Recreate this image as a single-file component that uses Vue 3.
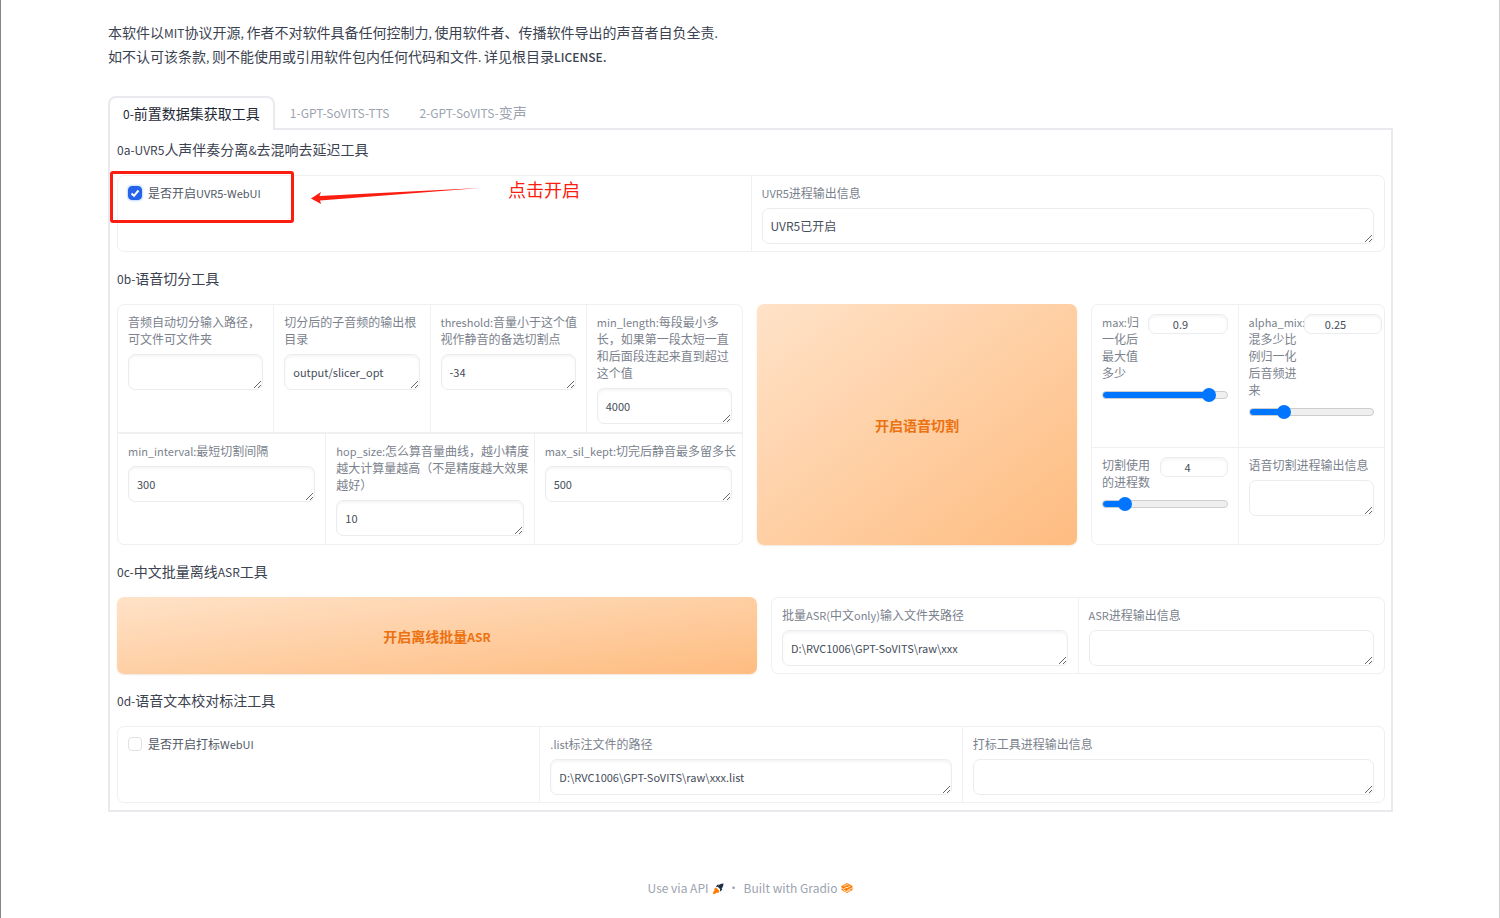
<script setup>
import { h, reactive, ref } from 'vue'

// One span per line, with runs of Latin text set smaller than the Chinese around them.
const parts = (line) =>
  line.split(/([\x20-\x7e]+)/).filter(Boolean).map((part) =>
    /^[\x20-\x7e]+$/.test(part) ? h('span', { class: 'latin' }, part) : part
  )
const Mixed = (props) => {
  const lines = props.text.split('\n')
  return h('span', lines.length > 1 ? lines.map((line) => h('span', { class: 'line' }, parts(line))) : parts(lines[0]))
}
Mixed.props = ['text']

const tabs = ['0-前置数据集获取工具', '1-GPT-SoVITS-TTS', '2-GPT-SoVITS-变声']
const active = ref(0)

const uvrOpen = ref(true)
const uvrInfo = ref('UVR5已开启')
const labelOpen = ref(false)

const sliceRows = reactive([
  [
    { id: 'slice-in', label: '音频自动切分输入路径，\n可文件可文件夹', value: '' },
    { id: 'slice-out', label: '切分后的子音频的输出根\n目录', value: 'output/slicer_opt' },
    { id: 'threshold', label: 'threshold:音量小于这个值\n视作静音的备选切割点', value: '-34' },
    { id: 'min-length', label: 'min_length:每段最小多\n长，如果第一段太短一直\n和后面段连起来直到超过\n这个值', value: '4000' }
  ],
  [
    { id: 'min-interval', label: 'min_interval:最短切割间隔', value: '300' },
    { id: 'hop-size', label: 'hop_size:怎么算音量曲线，越小精度\n越大计算量越高（不是精度越大效果\n越好）', value: '10' },
    { id: 'max-sil', label: 'max_sil_kept:切完后静音最多留多长', value: '500' }
  ]
])

const sliders = reactive([
  { id: 'max', size: 'wide', label: 'max:归\n一化后\n最大值\n多少', value: 0.9, min: 0, max: 1, step: 0.05 },
  { id: 'alpha', size: 'over', label: 'alpha_mix:\n混多少比\n例归一化\n后音频进\n来', value: 0.25, min: 0, max: 1, step: 0.05 },
  { id: 'procs', size: 'narrow', label: '切割使用\n的进程数', value: 4, min: 1, max: 23, step: 1 }
])
const fill = (s) => ({ '--fill': (s.value - s.min) / (s.max - s.min) })

const sliceInfo = ref('')
const asrPath = ref('D:\\RVC1006\\GPT-SoVITS\\raw\\xxx')
const asrInfo = ref('')
const listPath = ref('D:\\RVC1006\\GPT-SoVITS\\raw\\xxx.list')
const listInfo = ref('')
</script>

<template>
  <div class="page">
    <main>
      <p class="intro">
        <Mixed text="本软件以MIT协议开源, 作者不对软件具备任何控制力, 使用软件者、传播软件导出的声音者自负全责." /><br>
        <Mixed text="如不认可该条款, 则不能使用或引用软件包内任何代码和文件. 详见根目录" /><strong>LICENSE</strong>.
      </p>

      <nav class="tabs" role="tablist">
        <button
          v-for="(tab, i) in tabs" :key="tab" type="button" role="tab"
          class="tab" :class="{ selected: active === i }" :aria-selected="active === i"
          @click="active = i"
        ><Mixed :text="tab" /></button>
      </nav>

      <section class="panel">
        <h2><Mixed text="0a-UVR5人声伴奏分离&去混响去延迟工具" /></h2>
        <div class="form marked">
          <div class="row">
            <div class="cell">
              <label class="check"><input v-model="uvrOpen" type="checkbox"><Mixed text="是否开启UVR5-WebUI" /></label>
            </div>
            <div class="cell">
              <label class="caption" for="uvr-info"><Mixed text="UVR5进程输出信息" /></label>
              <textarea id="uvr-info" v-model="uvrInfo" class="output" rows="1"></textarea>
            </div>
          </div>
          <div class="highlight"></div>
          <svg class="arrow" width="172" height="20" viewBox="0 0 172 20" aria-hidden="true">
            <path d="M1 13.500 L11 7 L9.500 11 L170 3 L10 15.500 L11 19 Z" fill="#fb1d10" />
          </svg>
          <span class="note">点击开启</span>
        </div>

        <h2><Mixed text="0b-语音切分工具" /></h2>
        <div class="slicer">
          <div class="form">
            <div v-for="(row, r) in sliceRows" :key="r" class="row">
              <div v-for="f in row" :key="f.id" class="cell">
                <label class="caption" :for="f.id"><Mixed :text="f.label" /></label>
                <textarea :id="f.id" v-model="f.value" rows="1"></textarea>
              </div>
            </div>
          </div>
          <button type="button" class="primary"><Mixed text="开启语音切割" /></button>
          <div class="form quad">
            <div v-for="s in sliders" :key="s.id" class="cell">
              <div class="slider-head" :class="s.size">
                <label class="caption" :for="s.id"><Mixed :text="s.label" /></label>
                <input v-model.number="s.value" type="text" inputmode="decimal" class="number" :aria-label="s.id">
              </div>
              <input
                :id="s.id" v-model.number="s.value" class="range" type="range"
                :min="s.min" :max="s.max" :step="s.step" :style="fill(s)"
              >
            </div>
            <div class="cell">
              <label class="caption" for="slice-info"><Mixed text="语音切割进程输出信息" /></label>
              <textarea id="slice-info" v-model="sliceInfo" class="output" rows="1"></textarea>
            </div>
          </div>
        </div>

        <h2><Mixed text="0c-中文批量离线ASR工具" /></h2>
        <div class="asr">
          <button type="button" class="primary"><Mixed text="开启离线批量ASR" /></button>
          <div class="form">
            <div class="row">
              <div class="cell">
                <label class="caption" for="asr-path"><Mixed text="批量ASR(中文only)输入文件夹路径" /></label>
                <textarea id="asr-path" v-model="asrPath" rows="1"></textarea>
              </div>
              <div class="cell">
                <label class="caption" for="asr-info"><Mixed text="ASR进程输出信息" /></label>
                <textarea id="asr-info" v-model="asrInfo" class="output" rows="1"></textarea>
              </div>
            </div>
          </div>
        </div>

        <h2><Mixed text="0d-语音文本校对标注工具" /></h2>
        <div class="form">
          <div class="row">
            <div class="cell">
              <label class="check"><input v-model="labelOpen" type="checkbox"><Mixed text="是否开启打标WebUI" /></label>
            </div>
            <div class="cell">
              <label class="caption" for="list-path"><Mixed text=".list标注文件的路径" /></label>
              <textarea id="list-path" v-model="listPath" rows="1"></textarea>
            </div>
            <div class="cell">
              <label class="caption" for="list-info"><Mixed text="打标工具进程输出信息" /></label>
              <textarea id="list-info" v-model="listInfo" class="output" rows="1"></textarea>
            </div>
          </div>
        </div>
      </section>
    </main>

    <footer>
      <a href="#api">Use via API
        <svg width="11" height="11" viewBox="0 0 22 22" aria-hidden="true">
          <path d="M21 1 C15 1 12 3 9 7 L15 13 C18 11 21 7 21 1 Z" fill="#1f2f45" />
          <path d="M12 3 L8 4 L6 8 L9 8 Z M18 10 L18 14 L14 17 L14 13 Z" fill="#1f2f45" />
          <path d="M6 9 L13 16 C12 20 9 20 7 19 C6 21 3 22 0 22 C0 19 1 16 3 15 C2 12 3 10 6 9 Z" fill="#ff7c00" />
        </svg>
      </a>
      <span class="dot">·</span>
      <a href="#gradio">Built with Gradio
        <svg width="12" height="12" viewBox="0 0 24 24" aria-hidden="true">
          <path d="M12 2 L23 8 V16 L12 22 L1 16 V8 Z" fill="#ff7c00" />
          <path d="M5 8.500 L12 5 L15 6.500 M9 10 L12 11.500 L19 8 M1 12.500 L5 14 L12 10.500 M12 17 L23 11.500 M5 16 L12 19.500 L19 16" fill="none" stroke="#fff" stroke-width="1.500" />
        </svg>
      </a>
    </footer>
  </div>
</template>

<style>
body { margin: 0; background: #fff; }
</style>

<style scoped>
.page {
  box-sizing: border-box;
  min-height: 100vh;
  padding: 20px 106px 0 107px;
  border-left: 1px solid #85858a;
  border-right: 1px solid #cfcfd2;
  background: #fff;
  color: #3b4250;
  font: 14px/24px "Noto Sans CJK SC", sans-serif;
}
.page * { box-sizing: border-box; }
.page :deep(.latin), .intro strong { font-size: 12px; line-height: 1; }
.page :deep(.line) { display: block; }
.intro { margin: 0; }
.intro strong { font-weight: 500; }

.tabs { display: flex; margin-top: 28px; }
.tab {
  height: 34px;
  margin-bottom: -2px;
  padding: 0 14px 2px;
  border: 1px solid transparent;
  background: none;
  color: #9ca3af;
  font: inherit;
  white-space: nowrap;
}
.tab.selected {
  position: relative;
  padding: 0 13px 3px;
  border: 2px solid #e8eaed;
  border-bottom: 0;
  border-radius: 8px 8px 0 0;
  background: #fff;
  color: #1f2937;
}

.panel {
  display: flex;
  flex-direction: column;
  gap: 14px;
  padding: 7px 6px 7px 7px;
  border: 2px solid #e8eaed;
}
h2 { margin: 0; font: inherit; }

.form {
  display: flex;
  flex-direction: column;
  gap: 2px;
  min-width: 0;
  border: 1px solid #eff0f2;
  border-radius: 7px;
  background: #eff0f2;
}
.row { display: flex; flex: 1 0 auto; gap: 1px; }
.cell { flex: 1 1 0; min-width: 0; padding: 8px 10px 7px; background: #fff; }
.slicer .cell { padding-bottom: 8px; }
.form > .row:first-child > .cell:first-child { border-top-left-radius: 6px; }
.form > .row:first-child > .cell:last-child { border-top-right-radius: 6px; }
.form > .row:nth-last-child(1) > .cell:first-child { border-bottom-left-radius: 6px; }
.form > .row:nth-last-child(1) > .cell:last-child { border-bottom-right-radius: 6px; }
.marked > .row > .cell:first-child { border-radius: 6px 0 0 6px; }
.marked > .row > .cell:nth-child(2) { border-radius: 0 6px 6px 0; }

.caption {
  display: block;
  margin: 0 -8px 7px 0;
  color: #7b828d;
  font-size: 12px;
  line-height: 17px;
}
.caption :deep(.latin), .check :deep(.latin) { font-size: 11px; }
.check { display: flex; align-items: center; gap: 6px; color: #515865; font-size: 12px; line-height: 17px; }
.check input {
  appearance: none;
  width: 14px;
  height: 14px;
  margin: 0;
  border: 1px solid #dfe1e5;
  border-radius: 4px;
  background: #fff;
}
.check input:checked {
  border-color: #2563eb;
  background: #2563eb url("data:image/svg+xml,%3Csvg xmlns='http://www.w3.org/2000/svg' viewBox='0 0 12 12'%3E%3Cpath d='M2.500 6.500 L5 8.800 L9.500 3.500' fill='none' stroke='white' stroke-width='2'/%3E%3C/svg%3E") center / 12px no-repeat;
  box-shadow: 0 0 2px 1px #bfdbfe;
}

textarea, .number {
  display: block;
  width: 100%;
  border: 1px solid #eaecef;
  border-radius: 7px;
  outline: 0;
  background: #fff;
  box-shadow: inset 0 2px 3px #f4f5f6;
  color: #464d5a;
  font: 11px/18px "Noto Sans CJK SC", sans-serif;
}
textarea { height: 36px; padding: 8px; overflow: hidden; resize: vertical; }
textarea.output { box-shadow: none; font-size: 12px; }

.slicer { display: grid; grid-template-columns: 626fr 320fr 294fr; gap: 14px; }
.asr { display: grid; grid-template-columns: 640fr 614fr; gap: 14px; }
.primary {
  border: 0;
  border-radius: 7px;
  background: linear-gradient(to bottom right, #ffe2c8, #febc80);
  box-shadow: 0 1px 2px #f1e7df;
  color: #ec7211;
  font: inherit;
  font-weight: 700;
}

.quad { display: grid; grid-template-columns: 1fr 1fr; gap: 1px; }
.quad .cell:nth-child(1) { border-top-left-radius: 6px; }
.quad .cell:nth-child(2) { border-top-right-radius: 6px; }
.quad .cell:nth-child(3) { border-bottom-left-radius: 6px; }
.quad .cell:nth-child(4) { border-bottom-right-radius: 6px; }
.slider-head { display: flex; justify-content: space-between; align-items: flex-start; }
.slider-head .caption { flex: none; margin-right: 0; }
.slider-head .number {
  flex: none;
  width: 80px;
  height: 20px;
  margin-top: 1px;
  padding: 0 22px 0 8px;
  text-align: center;
}
.slider-head.narrow .number { width: 68px; padding-right: 20px; }
.slider-head.over .caption { width: 55px; }
.slider-head.over .number { width: 78px; }

.range {
  appearance: none;
  display: block;
  width: 100%;
  height: 14px;
  margin: 0;
  background: none;
}
.range::-webkit-slider-runnable-track {
  height: 8px;
  border: 1px solid #cdcdcd;
  border-radius: 4px;
  background:
    linear-gradient(#0075ff, #0075ff) 0 0 / calc(7px + var(--fill) * (100% - 14px)) 100% no-repeat border-box,
    #efefef;
}
.range::-webkit-slider-thumb {
  appearance: none;
  width: 14px;
  height: 14px;
  margin-top: -4px;
  border-radius: 50%;
  background: #0075ff;
}

/* Hand-drawn hints laid over the first form */
.marked { position: relative; }
.highlight {
  position: absolute;
  top: -5px;
  left: -8px;
  width: 184px;
  height: 52px;
  border: 3px solid #fb1d10;
  border-radius: 3px;
}
.arrow { position: absolute; top: 9px; left: 192px; }
.note { position: absolute; top: 1px; left: 390px; color: #fb1d10; font-size: 18px; }

footer {
  display: flex;
  justify-content: center;
  align-items: center;
  margin-top: 64px;
  color: #9ca3af;
  font-size: 12px;
}
footer a { display: flex; align-items: center; gap: 4px; color: inherit; text-decoration: none; }
.dot { margin: 0 4px; }
</style>
